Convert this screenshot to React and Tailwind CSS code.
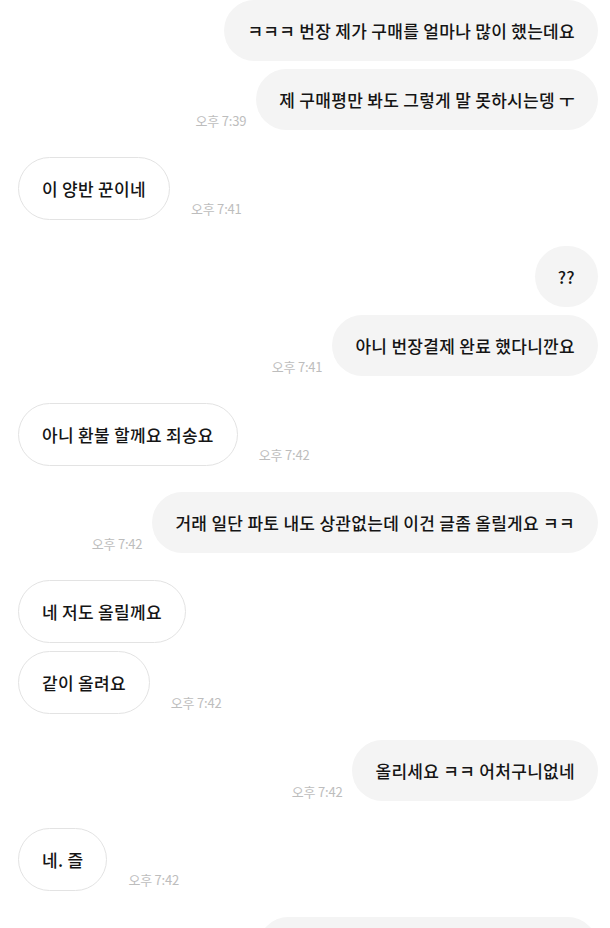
const groups = [
  { side: "right", texts: ["ㅋㅋㅋ 번장 제가 구매를 얼마나 많이 했는데요", "제 구매평만 봐도 그렇게 말 못하시는뎅 ㅜ"], time: "오후 7:39" },
  { side: "left", texts: ["이 양반 꾼이네"], time: "오후 7:41" },
  { side: "right", texts: ["??", "아니 번장결제 완료 했다니깐요"], time: "오후 7:41" },
  { side: "left", texts: ["아니 환불 할께요 죄송요"], time: "오후 7:42" },
  { side: "right", texts: ["거래 일단 파토 내도 상관없는데 이건 글좀 올릴게요 ㅋㅋ"], time: "오후 7:42" },
  { side: "left", texts: ["네 저도 올릴께요", "같이 올려요"], time: "오후 7:42" },
  { side: "right", texts: ["올리세요 ㅋㅋ 어처구니없네"], time: "오후 7:42" },
  { side: "left", texts: ["네. 즐"], time: "오후 7:42" },
];

function Bubble({ side, text }) {
  if (side === "right") {
    return (
      <div className="h-[61px] flex items-center justify-center min-w-[61px] px-[23px] rounded-full bg-[#f4f4f4] text-[17px] tracking-[0.3px] font-medium text-[#151515] whitespace-nowrap">
        {text}
      </div>
    );
  }
  return (
    <div className="h-[63px] flex items-center px-[23px] rounded-full bg-white border border-[#e3e3e3] text-[17px] tracking-[0.3px] font-medium text-[#151515] whitespace-nowrap">
      {text}
    </div>
  );
}

function Time({ children, side }) {
  return (
    <span
      className={
        "text-[13px] leading-4 text-[#bdbdbd] whitespace-nowrap tracking-[-0.2px] " +
        (side === "right" ? "mr-[10px] pb-[1px]" : "ml-[21px] pb-[3px]")
      }
    >
      {children}
    </span>
  );
}

function Group({ side, texts, time }) {
  return (
    <div className={"flex flex-col gap-[8px] " + (side === "right" ? "items-end" : "items-start mt-px")}>
      {texts.map((t, i) => {
        const last = i === texts.length - 1;
        return (
          <div key={i} className="flex items-end">
            {side === "right" && last && time && <Time side="right">{time}</Time>}
            <Bubble side={side} text={t} />
            {side === "left" && last && time && <Time side="left">{time}</Time>}
          </div>
        );
      })}
    </div>
  );
}

export default function App() {
  return (
    <div className="h-screen bg-white font-['Noto_Sans_CJK_KR','Noto_Sans',sans-serif] pl-[18px] pr-[12px] overflow-hidden">
      <div className="flex flex-col gap-[26px]">
        {groups.map((g, i) => (
          <Group key={i} {...g} />
        ))}
        {/* next message, cut off by the bottom edge */}
        <div className="flex justify-end">
          <div className="h-[61px] w-[340px] rounded-full bg-[#f4f4f4]" />
        </div>
      </div>
    </div>
  );
}
